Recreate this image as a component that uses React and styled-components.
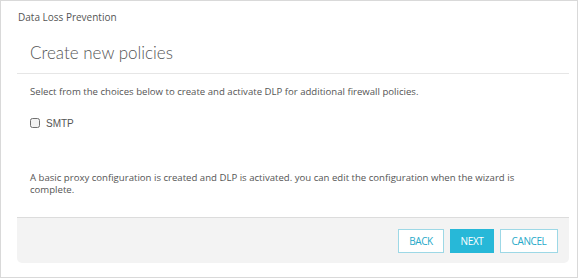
import React, { useState } from 'react';
import styled, { createGlobalStyle } from 'styled-components';

const GlobalStyle = createGlobalStyle`
  html, body { margin: 0; padding: 0; background: #fff; }
  * { box-sizing: border-box; }
`;

const Frame = styled.div`
  width: 578px;
  height: 278px;
  border: 1px solid #d9d9d9;
  background: #fff;
  padding: 0 8px 14px 16px;
  display: flex;
  flex-direction: column;
  font-family: "Open Sans", "Liberation Sans", sans-serif;
  color: #555;
`;

const Crumb = styled.div`
  font-size: 10px;
  line-height: 12px;
  padding: 10px 0 0 1px;
  height: 30px;
  color: #555;
`;

const Panel = styled.div`
  flex: 1;
  display: flex;
  flex-direction: column;
`;

const Title = styled.h1`
  margin: 0;
  font-family: "Lato", "Open Sans", sans-serif;
  font-weight: 300;
  font-size: 17px;
  line-height: 24px;
  color: #555;
  padding: 10px 0 8px 13px;
  border-bottom: 1px solid #e6e6e6;
`;

const Body = styled.div`
  flex: 1;
  padding: 0 13px;
  display: flex;
  flex-direction: column;
`;

const Text = styled.p`
  margin: ${p => p.$top || 0}px 0 0;
  font-size: 9.6px;
  line-height: 12.5px;
  color: #555;
  max-width: 500px;
`;

const CheckRow = styled.label`
  display: flex;
  align-items: center;
  gap: 6px;
  margin-top: 19px;
  font-family: "Liberation Sans", Arial, sans-serif;
  font-size: 10px;
  color: #555;
`;

const Box = styled.input`
  margin: 0;
  width: 10px;
  height: 10px;
  accent-color: #888;
  filter: grayscale(1) brightness(0.95);
`;

const Footer = styled.div`
  height: 46px;
  background: #f3f3f3;
  border-top: 1px solid #dcdcdc;
  border-radius: 0 0 5px 5px;
  display: flex;
  justify-content: flex-end;
  align-items: center;
  gap: 6px;
  padding: 0 11px 0 0;
`;

const Button = styled.button`
  height: 24px;
  width: ${p => p.$w}px;
  padding: 0;
  border: 1px solid ${p => (p.$primary ? '#27b8d8' : '#9dd8e6')};
  background: ${p => (p.$primary ? '#27b8d8' : '#fff')};
  color: ${p => (p.$primary ? '#fff' : '#26a9c9')};
  font-family: "Open Sans", sans-serif;
  font-size: 10px;
  letter-spacing: -0.4px;
  text-transform: uppercase;
  cursor: pointer;
`;

export default function App() {
  const [smtp, setSmtp] = useState(false);
  return (
    <>
      <GlobalStyle />
      <Frame>
        <Crumb>Data Loss Prevention</Crumb>
        <Panel>
          <Title>Create new policies</Title>
          <Body>
            <Text $top={12}>Select from the choices below to create and activate DLP for additional firewall policies.</Text>
            <CheckRow>
              <Box type="checkbox" checked={smtp} onChange={e => setSmtp(e.target.checked)} />
              SMTP
            </CheckRow>
            <Text $top={43}>
              A basic proxy configuration is created and DLP is activated. you can edit the configuration when the wizard is complete.
            </Text>
          </Body>
          <Footer>
            <Button $w={46}>Back</Button>
            <Button $primary $w={44}>Next</Button>
            <Button $w={58}>Cancel</Button>
          </Footer>
        </Panel>
      </Frame>
    </>
  );
}
